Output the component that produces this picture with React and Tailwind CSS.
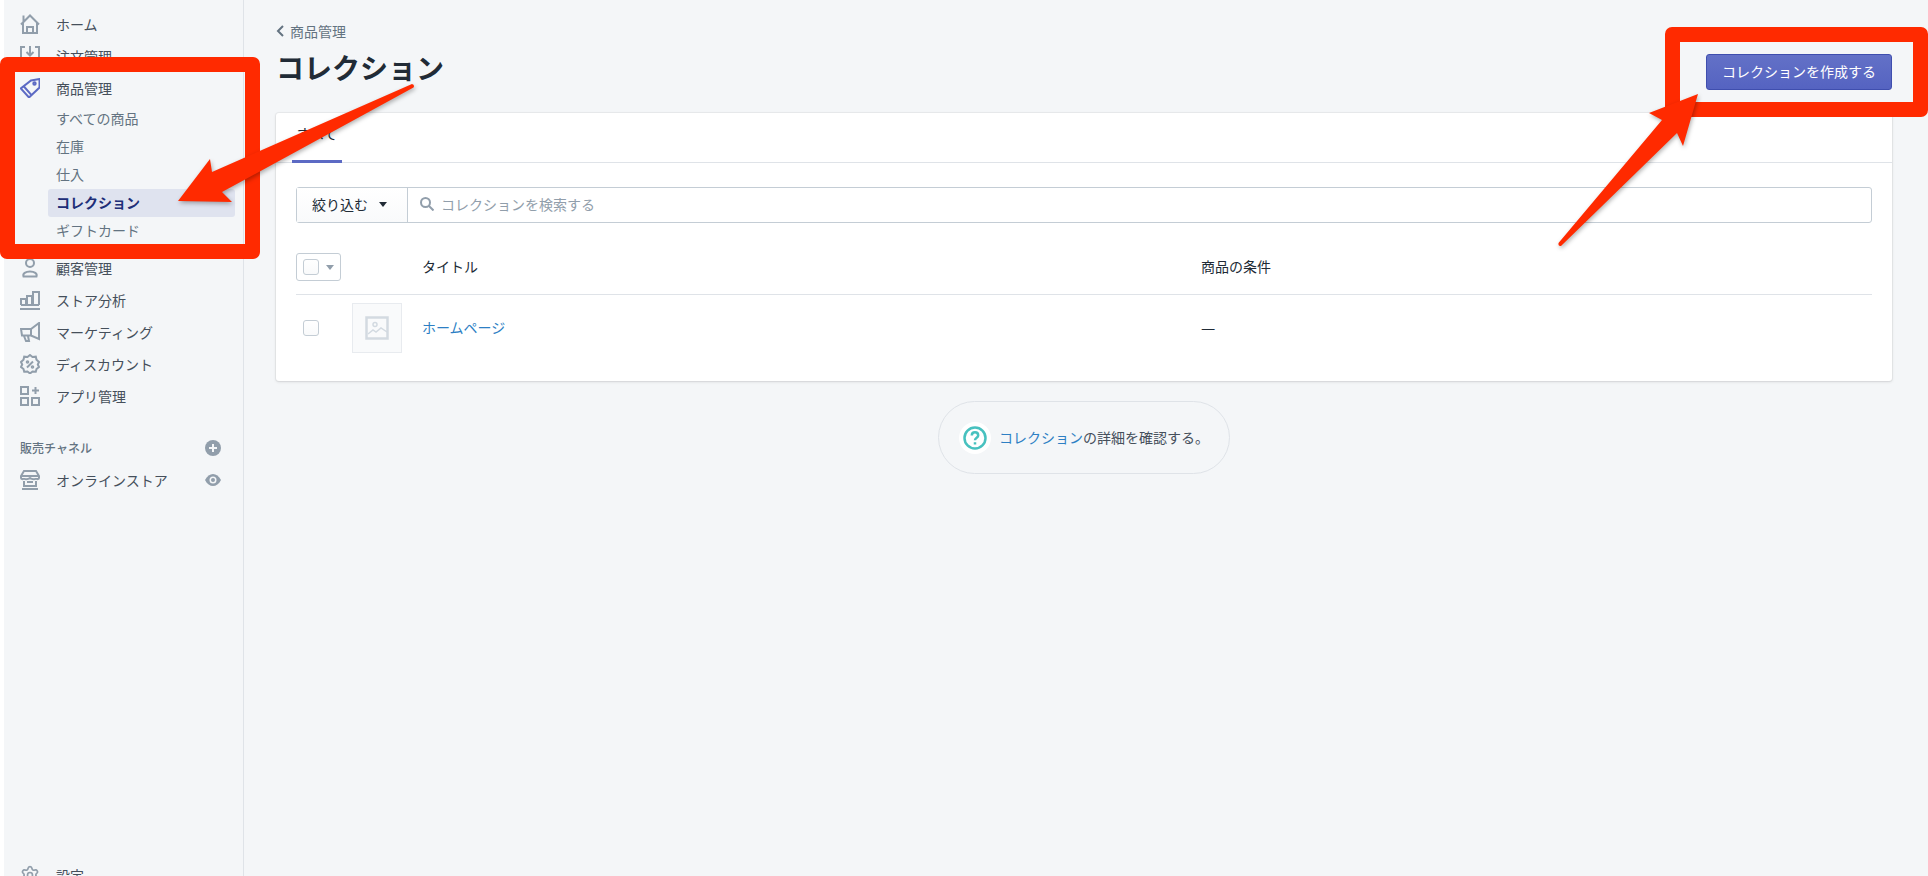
import { Settings } from "lucide-react"

const iconProps = {
  width: 20,
  height: 20,
  viewBox: "0 0 20 20",
  fill: "none",
  stroke: "#919eab",
  strokeWidth: 2,
}

function HomeIcon() {
  return (
    <svg {...iconProps}>
      <path d="M1 10.500 10 1.500l9 9M3.500 1.500v6M3 9v10h14V9M7 19v-6h6v6" />
    </svg>
  )
}

function OrdersIcon() {
  return (
    <svg {...iconProps}>
      <path d="M5 1H1v14h18V1h-4M10 0v9M6.500 6l3.500 3.500L13.500 6" />
    </svg>
  )
}

function TagIcon() {
  return (
    <svg {...iconProps} stroke="#5c6ac4">
      <path d="M11 2.500 19.500 1v8.500L9 19.500 0.800 10.500zM3.500 8l7.800 8.800" />
      <circle cx="14.500" cy="5.500" r="1.200" />
    </svg>
  )
}

function CustomerIcon() {
  return (
    <svg {...iconProps}>
      <circle cx="10" cy="5" r="4" />
      <path d="M3.500 18.500c-1-3 2-5 6.500-5s7.500 2 6.500 5z" />
    </svg>
  )
}

function AnalyticsIcon() {
  return (
    <svg {...iconProps}>
      <path d="M1 15V9h5v6M7 15V6h5v9M13 15V2h6v13M1 15h18M0 19h20" />
    </svg>
  )
}

function MarketingIcon() {
  return (
    <svg {...iconProps}>
      <path d="M19 1v16L11 13.500H2L1 7h10zM11 7v6.500M4 14l2 5h3l-1-5" />
    </svg>
  )
}

function DiscountIcon() {
  return (
    <svg {...iconProps}>
      <path d="M10 1 12.500 3 15.800 2.700 16.500 5.800 19 8 17.800 10.500 19 13 16.500 15 15.800 17.800 12.500 17.500 10 19.500 7.500 17.500 4.200 17.800 3.500 15 1 13 2.200 10.500 1 8 3.500 5.800 4.200 2.700 7.500 3z" />
      <path d="M13 7.500 7 13.500" />
      <circle cx="7.500" cy="8" r="0.800" />
      <circle cx="12.500" cy="13" r="0.800" />
    </svg>
  )
}

function AppsIcon() {
  return (
    <svg {...iconProps}>
      <path d="M1 1h7v7H1zM1 12h7v7H1zM12 12h7v7h-7zM15.500 1v7M12 4.500h7" />
    </svg>
  )
}

function StoreIcon() {
  return (
    <svg {...iconProps}>
      <path d="M4 1h12l3 5v2c0 1.500-3 1.500-3 0 0 1.500-4 1.500-6 0-2 1.500-6 1.500-6 0 0 1.500-3 1.500-3 0V6zM1 6h18M4 11v5h12v-5M7 12h6M2 19h16" />
    </svg>
  )
}

function NavItem({ icon, label }) {
  return (
    <div className="flex h-8 items-center text-sm text-[#454f5b]">
      <div className="flex w-9 shrink-0 items-center">{icon}</div>
      {label}
    </div>
  )
}

function Checkbox() {
  return <div className="h-4 w-4 rounded-[3px] border border-[#c4cdd5] bg-gradient-to-b from-white to-[#f9fafb]"></div>
}

function Sidebar() {
  return (
    <aside className="flex h-[876px] w-[240px] shrink-0 flex-col overflow-hidden border-r border-[#dfe3e8] pl-4 pr-2 pt-2">
      <NavItem icon={<HomeIcon />} label="ホーム" />
      <NavItem icon={<OrdersIcon />} label="注文管理" />
      <NavItem icon={<TagIcon />} label="商品管理" />
      <div className="mt-px text-sm text-[#637381]">
        <div className="flex h-7 items-center pb-0.5 pl-9">すべての商品</div>
        <div className="flex h-7 items-center pb-0.5 pl-9">在庫</div>
        <div className="flex h-7 items-center pb-0.5 pl-9">仕入</div>
        <div className="ml-7 flex h-7 items-center rounded-[3px] bg-[#dfe3ef] pb-0.5 pl-2 font-bold text-[#202e78]">コレクション</div>
        <div className="flex h-7 items-center pb-0.5 pl-9">ギフトカード</div>
      </div>
      <div className="mt-[7px]">
        <NavItem icon={<CustomerIcon />} label="顧客管理" />
        <NavItem icon={<AnalyticsIcon />} label="ストア分析" />
        <NavItem icon={<MarketingIcon />} label="マーケティング" />
        <NavItem icon={<DiscountIcon />} label="ディスカウント" />
        <NavItem icon={<AppsIcon />} label="アプリ管理" />
      </div>
      <div className="mt-6 flex h-6 items-center justify-between pr-[14px] text-xs font-medium text-[#637381]">
        販売チャネル
        <svg width="16" height="16" viewBox="0 0 16 16">
          <circle cx="8" cy="8" r="8" fill="#919eab" />
          <path d="M8 4v8M4 8h8" stroke="#f4f6f8" strokeWidth="2" />
        </svg>
      </div>
      <div className="mt-1 flex h-8 items-center justify-between pr-[14px]">
        <NavItem icon={<StoreIcon />} label="オンラインストア" />
        <svg width="16" height="12" viewBox="0 0 16 12">
          <path d="M0 6c2-4 5-6 8-6s6 2 8 6c-2 4-5 6-8 6s-6-2-8-6z" fill="#919eab" />
          <circle cx="8" cy="6" r="3.500" fill="#f4f6f8" />
          <circle cx="8" cy="6" r="2" fill="#919eab" />
        </svg>
      </div>
      <div className="mt-auto -mb-[15px]">
        <NavItem icon={<Settings size={20} color="#919eab" strokeWidth={2} />} label="設定" />
      </div>
    </aside>
  )
}

function Annotations() {
  return (
    <>
      <div className="absolute left-0 top-[57px] h-[202px] w-[260px] rounded-[7px] border-[15px] border-[#ff2a00]"></div>
      <div className="absolute left-[1665px] top-[27px] h-[90px] w-[263px] rounded-[7px] border-[15px] border-[#ff2a00]"></div>
      <svg className="pointer-events-none absolute inset-0 drop-shadow-[1px_2px_2px_rgba(0,0,0,0.3)]" width="1928" height="876" viewBox="0 0 1928 876">
        <path d="M412 84 212 172 210 159 178 201 232 202 222 192 413.500 87.500Q415 85 412 84Z" fill="#ff2a00" />
        <path d="M1558.500 243 1662 120 1649 113 1698 94 1683 146 1677 133 1561 246Q1558 246.500 1558.500 243Z" fill="#ff2a00" />
      </svg>
    </>
  )
}

export default function App() {
  return (
    <div className="relative flex h-[876px] w-full overflow-hidden bg-white pl-1 font-['Noto_Sans_CJK_JP',sans-serif]">
      <div className="flex min-w-0 flex-1 bg-[#f4f6f8]">
        <Sidebar />
        <main className="min-w-0 flex-1 pl-8 pr-9 pt-[21px]">
          <div className="flex h-5 items-center gap-[6px] text-sm text-[#637381]">
            <svg width="8" height="12" viewBox="0 0 8 12" fill="none" stroke="#637381" strokeWidth="2">
              <path d="M7 1 2 6l5 5" />
            </svg>
            商品管理
          </div>
          <div className="mt-[10px] flex h-[41px] items-start justify-between">
            <h1 className="text-[28px] leading-8 font-bold text-[#212b36]">コレクション</h1>
            <button className="mt-[3px] h-9 w-[186px] rounded-[3px] border border-[#3f4eae] bg-gradient-to-b from-[#6371c7] to-[#5563c1] pb-0.5 text-sm text-white">
              コレクションを作成する
            </button>
          </div>

          <div className="mt-[21px] h-[268px] rounded-[3px] bg-white shadow-[0_0_0_1px_rgba(63,63,68,0.05),0_1px_3px_0_rgba(63,63,68,0.15)]">
            <div className="h-[50px] border-b border-[#dfe3e8] pl-4">
              <div className="h-[50px] w-[50px] border-b-[3px] border-[#5c6ac4] pt-[10px] text-center text-sm text-[#212b36]">すべて</div>
            </div>

            <div className="px-5 pt-6">
              <div className="flex h-9 rounded-[3px] border border-[#c4cdd5] text-sm">
                <div className="flex w-[111px] shrink-0 items-center gap-[11px] border-r border-[#c4cdd5] bg-gradient-to-b from-white to-[#f9fafb] pb-0.5 pl-[15px] text-[#212b36]">
                  絞り込む
                  <svg width="8" height="5" viewBox="0 0 8 5">
                    <path d="M0 0h8L4 5z" fill="#212b36" />
                  </svg>
                </div>
                <div className="flex flex-1 items-center gap-[7px] pb-0.5 pl-3 text-[#919eab]">
                  <svg width="14" height="14" viewBox="0 0 14 14" fill="none" stroke="#919eab" strokeWidth="2">
                    <circle cx="5.500" cy="5.500" r="4.500" />
                    <path d="m9 9 4.500 4.500" />
                  </svg>
                  コレクションを検索する
                </div>
              </div>

              <div className="mt-[30px] grid h-[28px] grid-cols-[56px_70px_779px_1fr] items-center text-sm text-[#212b36]">
                <div className="flex h-7 w-[45px] items-center gap-[7px] rounded-[3px] border border-[#c4cdd5] pl-[6px]">
                  <Checkbox />
                  <svg width="8" height="5" viewBox="0 0 8 5">
                    <path d="M0 0h8L4 5z" fill="#919eab" />
                  </svg>
                </div>
                <div></div>
                <div className="pb-0.5">タイトル</div>
                <div className="pb-0.5">商品の条件</div>
              </div>

              <div className="mt-[13px] grid grid-cols-[56px_70px_779px_1fr] items-center border-t border-[#dfe3e8] pt-2 text-sm">
                <div className="pl-[7px]">
                  <Checkbox />
                </div>
                <div className="flex h-[50px] w-[50px] items-center justify-center border border-[#e8ebef] bg-[#f9fafb]">
                  <svg width="24" height="24" viewBox="0 0 24 24" fill="none" stroke="#d3dae1" strokeWidth="2.500">
                    <rect x="1.500" y="1.500" width="21" height="21" />
                    <circle cx="10" cy="8.500" r="2" strokeWidth="1.500" />
                    <path d="m3 18 5-4 3 2 5-4 6 4" strokeWidth="1.500" />
                  </svg>
                </div>
                <div className="pb-0.5 text-[#2d7fc4]">ホームページ</div>
                <div className="pb-0.5 text-base text-[#212b36]">—</div>
              </div>
            </div>
          </div>

          <div className="mx-auto mt-5 flex h-[73px] w-[292px] items-center gap-2 rounded-full border border-[#dfe3e8] pl-[20px] text-sm text-[#454f5b]">
            <div className="flex h-8 w-8 items-center justify-center rounded-full bg-white">
              <svg width="24" height="24" viewBox="0 0 24 24" fill="none" stroke="#47c1bf" strokeWidth="2.500">
                <circle cx="12" cy="12" r="10.500" />
                <path d="M8.800 9.500c0-4.200 6.400-4.200 6.400 0 0 2.300-3.200 2.300-3.200 4.800M12 16.200v2.300" />
              </svg>
            </div>
            <div className="pb-0.5">
              <span className="text-[#2d7fc4]">コレクション</span>の詳細を確認する。
            </div>
          </div>
        </main>
      </div>
      <Annotations />
    </div>
  )
}
